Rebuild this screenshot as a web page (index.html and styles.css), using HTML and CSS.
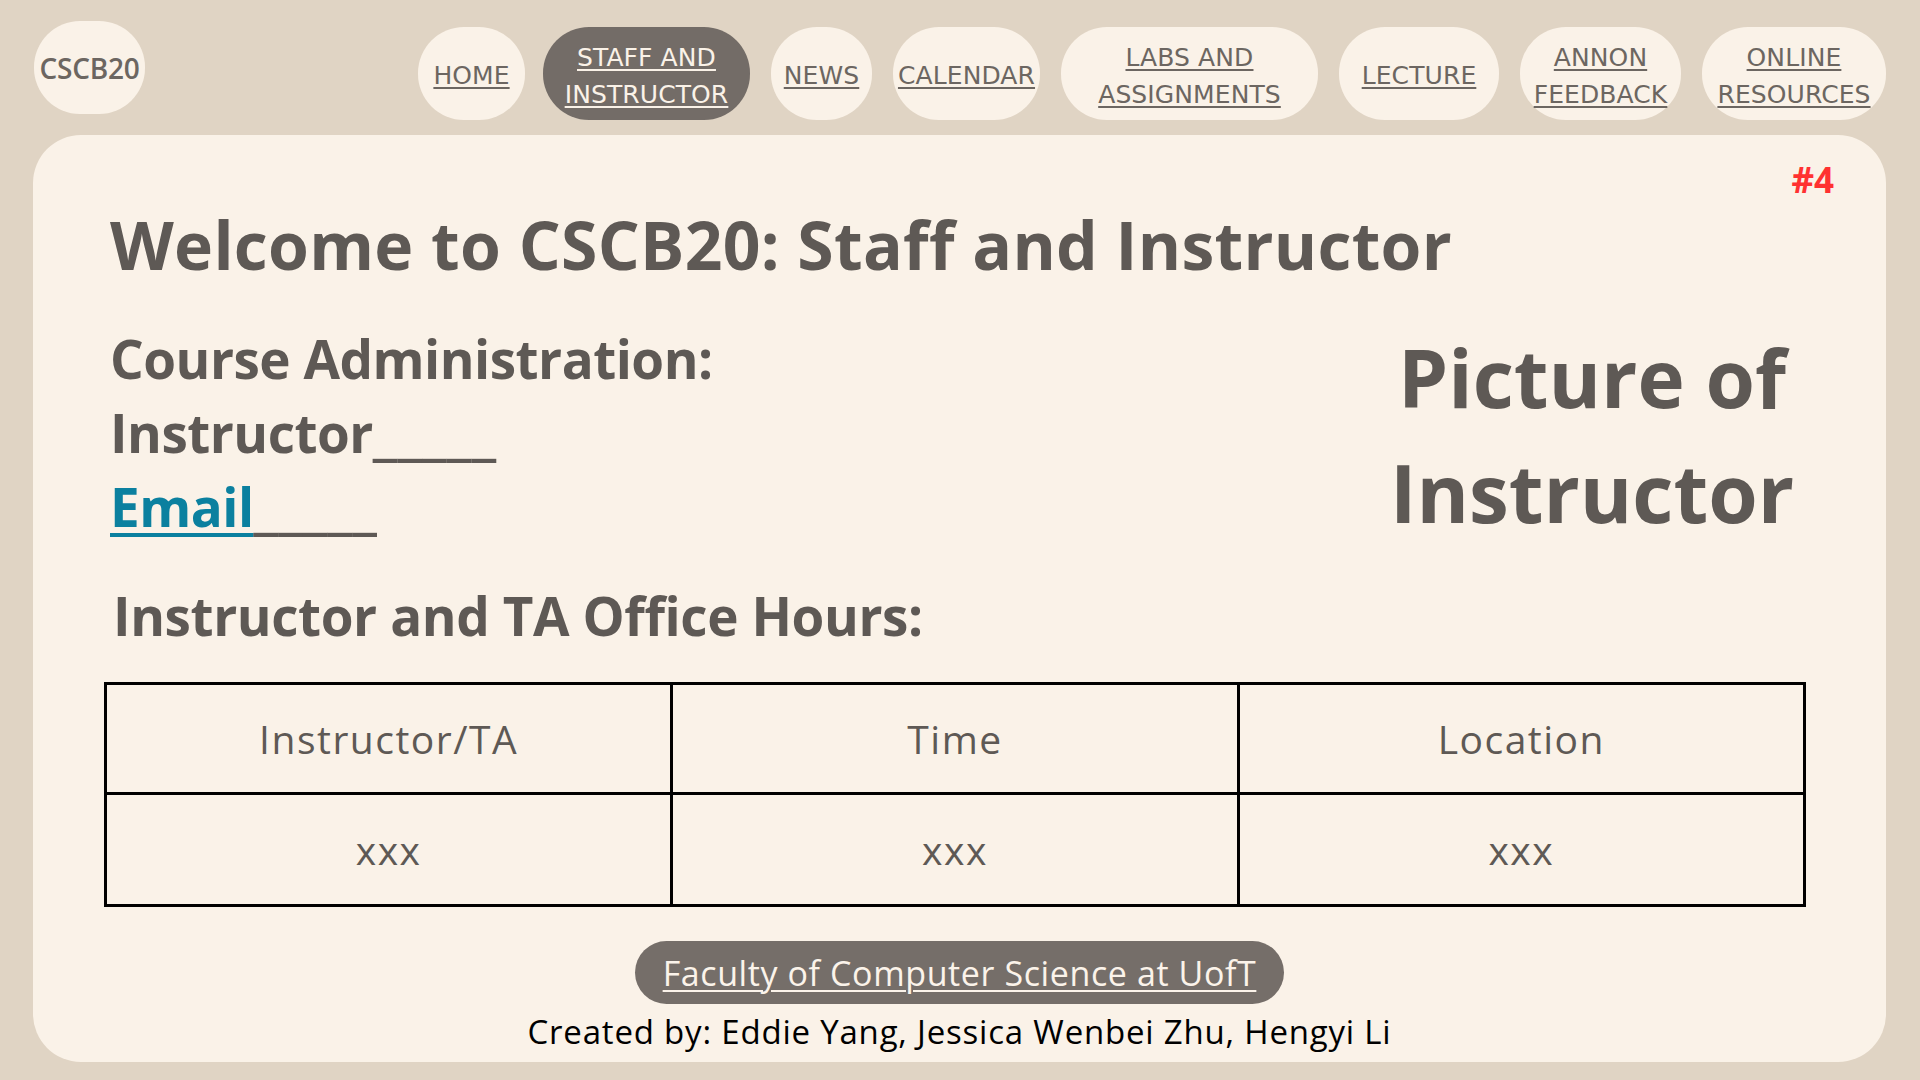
FILE: index.html
```html
<!DOCTYPE html>
<html lang="en">
<head>
<meta charset="utf-8">
<title>CSCB20 - Staff and Instructor</title>
<link rel="stylesheet" href="styles.css">
</head>
<body>
<header class="topbar">
  <div class="logo">CSCB20</div>
  <nav class="nav">
    <a class="pill w-home" href="#">HOME</a>
    <a class="pill pill-active w-staff" href="#">STAFF AND<br>INSTRUCTOR</a>
    <a class="pill w-news" href="#">NEWS</a>
    <a class="pill w-cal" href="#">CALENDAR</a>
    <a class="pill w-labs" href="#">LABS AND<br>ASSIGNMENTS</a>
    <a class="pill w-lec" href="#">LECTURE</a>
    <a class="pill w-annon" href="#">ANNON<br>FEEDBACK</a>
    <a class="pill w-online" href="#">ONLINE<br>RESOURCES</a>
  </nav>
</header>
<main class="card">
  <div class="badge">#4</div>
  <h1 class="title">Welcome to CSCB20: Staff and Instructor</h1>
  <section class="intro">
    <div class="admin">
      <p class="admin-line">Course Administration:</p>
      <p class="admin-line">Instructor<span class="blank">_____</span></p>
      <p class="admin-line"><a class="email" href="#">Email</a><span class="blank">_____</span></p>
    </div>
    <div class="picture">Picture of<br>Instructor</div>
  </section>
  <h2 class="hours-title">Instructor and TA Office Hours:</h2>
  <table class="hours">
    <tr class="hours-head">
      <td>Instructor/TA</td>
      <td>Time</td>
      <td>Location</td>
    </tr>
    <tr class="hours-row">
      <td>xxx</td>
      <td>xxx</td>
      <td>xxx</td>
    </tr>
  </table>
  <footer class="footer">
    <a class="faculty" href="#">Faculty of Computer Science at UofT</a>
    <p class="credits">Created by: Eddie Yang, Jessica Wenbei Zhu, Hengyi Li</p>
  </footer>
</main>
</body>
</html>
```
FILE: styles.css
```css
* { box-sizing: border-box; }
html, body { margin: 0; padding: 0; }
body {
  width: 1920px;
  height: 1080px;
  overflow: hidden;
  background: #e0d4c4;
  font-family: "Open Sans", "Liberation Sans", sans-serif;
  color: #5e5955;
}
.topbar {
  display: flex;
  align-items: flex-start;
  padding: 21px 34px 0 34px;
}
.logo {
  width: 111px;
  height: 93px;
  border-radius: 46px;
  background: #faf2e8;
  display: flex;
  align-items: center;
  justify-content: center;
  font-family: "Open Sans", sans-serif;
  font-weight: 600;
  font-size: 28px;
  color: #6c6661;
  letter-spacing: -0.2px;
}
.nav {
  margin-left: auto;
  margin-top: 6px;
  display: flex;
  gap: 21px;
}
.pill {
  height: 93px;
  padding-top: 4px;
  border-radius: 46px;
  background: #faf2e8;
  display: flex;
  align-items: center;
  justify-content: center;
  text-align: center;
  font-family: "DejaVu Sans", sans-serif;
  font-size: 25px;
  line-height: 37px;
  color: #6c6661;
  text-decoration: underline;
  text-decoration-thickness: 2px;
  text-underline-offset: 3px;
  letter-spacing: 0.1px;
}
.pill-active { background: #736c67; color: #faf2e8; }
.w-home { width: 107px; margin-right: -3px; }
.w-staff { width: 207px; }
.w-news { width: 101px; }
.w-cal { width: 147px; }
.w-labs { width: 257px; }
.w-lec { width: 160px; }
.w-annon { width: 161px; }
.w-online { width: 184px; }

.card {
  position: relative;
  margin: 15px 34px 0 33px;
  height: 927px;
  background: #faf2e8;
  border-radius: 48px;
  padding: 69px 80px 0 71px;
}
.badge {
  position: absolute;
  top: 27px;
  right: 52px;
  font-size: 35px;
  line-height: 35px;
  font-weight: 700;
  color: #ff3131;
}
.title {
  margin: 0;
  padding-left: 6px;
  font-size: 66px;
  line-height: 80px;
  font-weight: 700;
  color: #5e5955;
  letter-spacing: 0.3px;
}
.intro {
  display: flex;
  justify-content: space-between;
  align-items: flex-start;
  margin-top: 35px;
}
.admin {
  padding-left: 6px;
  margin-top: 3px;
}
.admin-line {
  margin: 0;
  height: 74px;
  font-size: 53px;
  line-height: 74px;
  font-weight: 700;
  color: #5e5955;
  letter-spacing: -0.5px;
}
.blank {
  font-size: 60px;
  line-height: 0;
  letter-spacing: 0;
}
.email {
  color: #0b809f;
  text-decoration: underline;
  text-decoration-thickness: 4px;
  text-underline-offset: 6px;
}
.picture {
  width: 428px;
  text-align: center;
  font-size: 80px;
  line-height: 115px;
  font-weight: 700;
  color: #5e5955;
}
.hours-title {
  margin: 30px 0 0 0;
  padding-left: 9px;
  font-size: 53px;
  line-height: 74px;
  font-weight: 700;
  color: #5e5955;
  letter-spacing: -0.4px;
}
.hours {
  margin-top: 29px;
  width: 100%;
  border-collapse: collapse;
  table-layout: fixed;
}
.hours td {
  border: 3px solid #000;
  text-align: center;
  vertical-align: middle;
  font-size: 39px;
  letter-spacing: 1.5px;
  color: #5e5955;
  padding: 0;
}
.hours-head td { height: 110px; }
.hours-row td { height: 112px; }
.footer {
  margin: 34px -9px 0 0;
  display: flex;
  flex-direction: column;
  align-items: center;
}
.faculty {
  width: 649px;
  height: 63px;
  border-radius: 32px;
  background: #756e69;
  color: #fbf3ea;
  display: flex;
  align-items: center;
  justify-content: center;
  font-size: 34px;
  letter-spacing: 0.6px;
  text-decoration: underline;
  text-decoration-thickness: 2px;
  text-underline-offset: 4px;
}
.credits {
  margin: 8px 0 0 0;
  font-size: 33px;
  line-height: 40px;
  letter-spacing: 0.8px;
  color: #000;
}
```
